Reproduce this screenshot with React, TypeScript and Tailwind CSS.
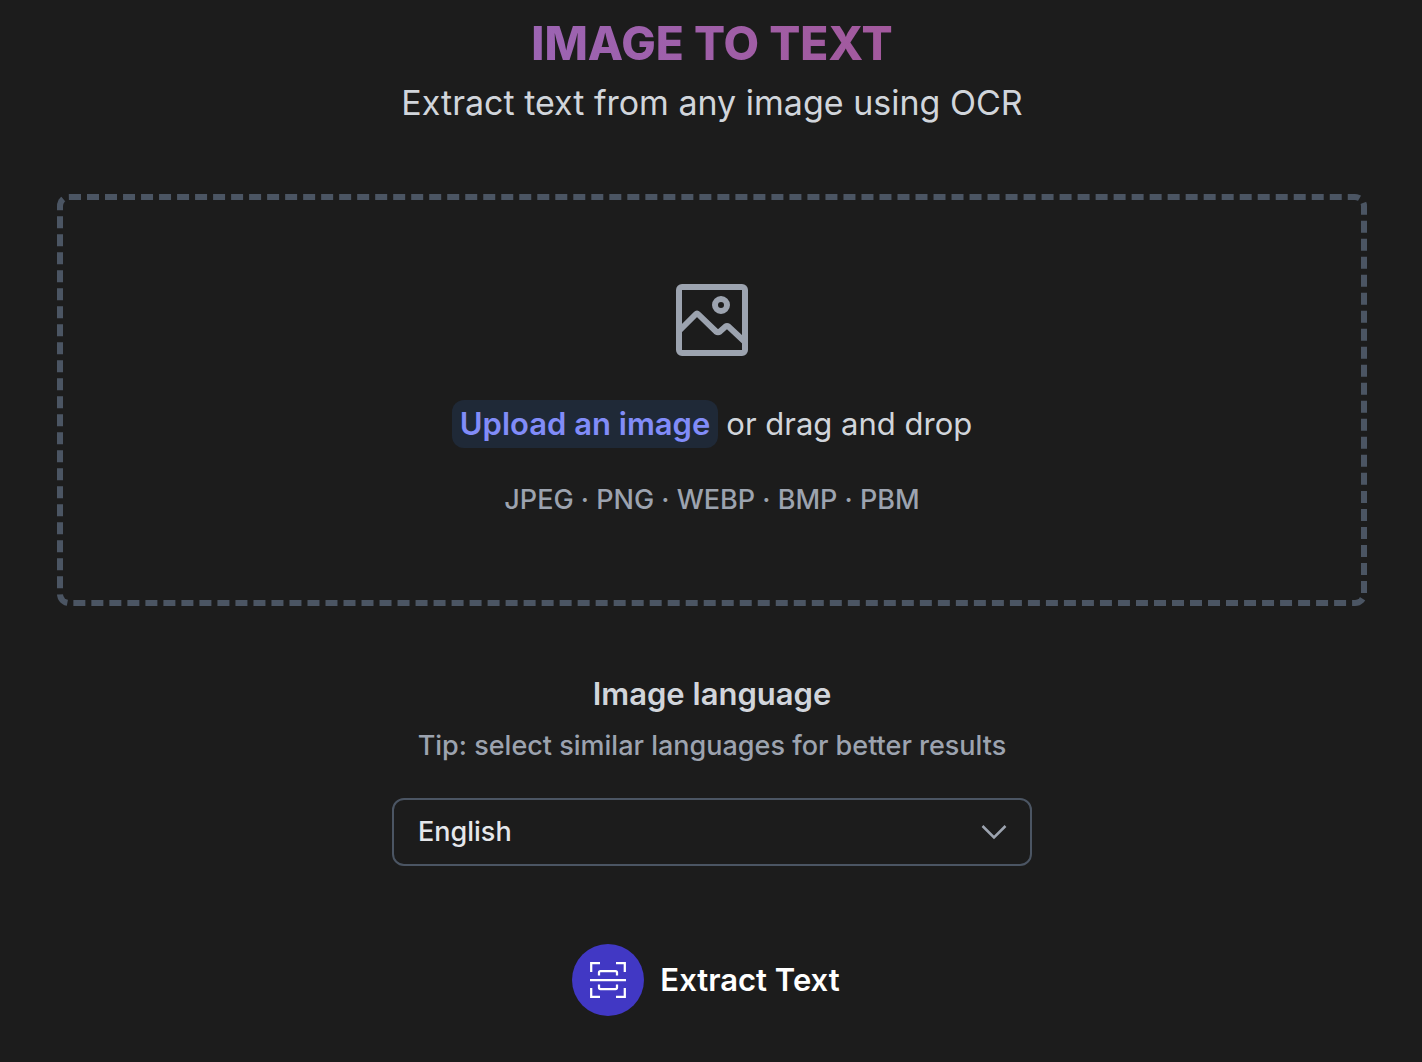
import React from "react";

function PhotoIcon() {
  return (
    <svg viewBox="0 0 72 72" fill="none" stroke="currentColor" strokeWidth="6" className="size-[72px] text-[#9ca3af]" aria-hidden="true">
      <path d="M6 0h60a6 6 0 0 1 6 6v60a6 6 0 0 1-6 6H6a6 6 0 0 1-6-6V6a6 6 0 0 1 6-6Zm0 6v60h60V6Z" fill="currentColor" fillRule="evenodd" stroke="none" />
      <circle cx="45" cy="21" r="6" />
      <path d="M3 47 19.500 30.500Q21 29 22.500 30.500L40 47.500Q42 49 44 47.500L49.500 42.500Q51 41.500 52.500 42.500L69 58" />
    </svg>
  );
}

function ScanIcon() {
  return (
    <svg viewBox="0 0 36 36" fill="none" stroke="currentColor" strokeWidth="2.25" className="size-9" aria-hidden="true">
      <path d="M1.2 10V1.2H10M26 1.2h8.8V10M34.8 26v8.8H26M10 34.8H1.2V26" />
      <path d="M0 18h36" />
      <path d="M9 13.5v-3A1.5 1.5 0 0 1 10.5 9h15a1.5 1.5 0 0 1 1.5 1.5v3M27 22.5v3a1.5 1.5 0 0 1-1.5 1.5h-15A1.5 1.5 0 0 1 9 25.5v-3" />
    </svg>
  );
}

function ChevronIcon() {
  return (
    <svg viewBox="0 0 26 16" fill="none" stroke="currentColor" strokeWidth="2.5" className="pointer-events-none absolute top-1/2 right-[25px] h-4 w-[26px] -translate-y-1/2 text-[#9ca3af]" aria-hidden="true">
      <path d="m1.5 2 11.5 11.5L24.500 2" />
    </svg>
  );
}

export default function App() {
  return (
    <main className="flex min-h-screen flex-col items-center bg-[#1c1c1c] pt-5 pr-[55px] pb-11 pl-[57px] font-['Inter',sans-serif] text-[#d1d5db]">
      <h1 className="w-full bg-linear-to-r from-[#9272d0] to-[#a94780] bg-clip-text text-center text-[46px] leading-[46px] font-extrabold text-transparent">
        IMAGE TO TEXT
      </h1>
      <p className="mt-3.5 text-center text-[34px] leading-[46px]">Extract text from any image using OCR</p>

      <section className="mt-[68px] flex w-full flex-col items-center rounded-xl border-[6px] border-dashed border-[#4b5563] pt-[84px] pb-20">
        <PhotoIcon />
        <div className="mt-11 flex items-center gap-2 text-[31px] leading-[48px]">
          <button type="button" className="rounded-xl bg-[#1f2937] px-2 font-semibold text-[#818cf8]">
            Upload an image
          </button>
          <span>or drag and drop</span>
        </div>
        <p className="mt-8 text-[27px] leading-10 font-medium text-[#9ca3af]">JPEG · PNG · WEBP · BMP · PBM</p>
      </section>

      <label htmlFor="language" className="mt-16 text-[31px] leading-[48px] font-semibold">
        Image language
      </label>
      <p className="mt-2 text-[27px] leading-10 font-medium text-[#9ca3af]">Tip: select similar languages for better results</p>
      <div className="relative mt-8 w-full max-w-[640px]">
        <select id="language" className="h-[68px] w-full appearance-none rounded-xl border-2 border-[#4b5563] bg-transparent px-6 text-[27px] font-medium text-[#e5e7eb]">
          <option>English</option>
        </select>
        <ChevronIcon />
      </div>

      <button type="button" className="mt-[78px] flex items-center gap-4 pr-3 text-[31px] leading-[48px] font-semibold text-white">
        <span className="flex size-[72px] items-center justify-center rounded-full bg-[#4138c4]">
          <ScanIcon />
        </span>
        Extract Text
      </button>
    </main>
  );
}
